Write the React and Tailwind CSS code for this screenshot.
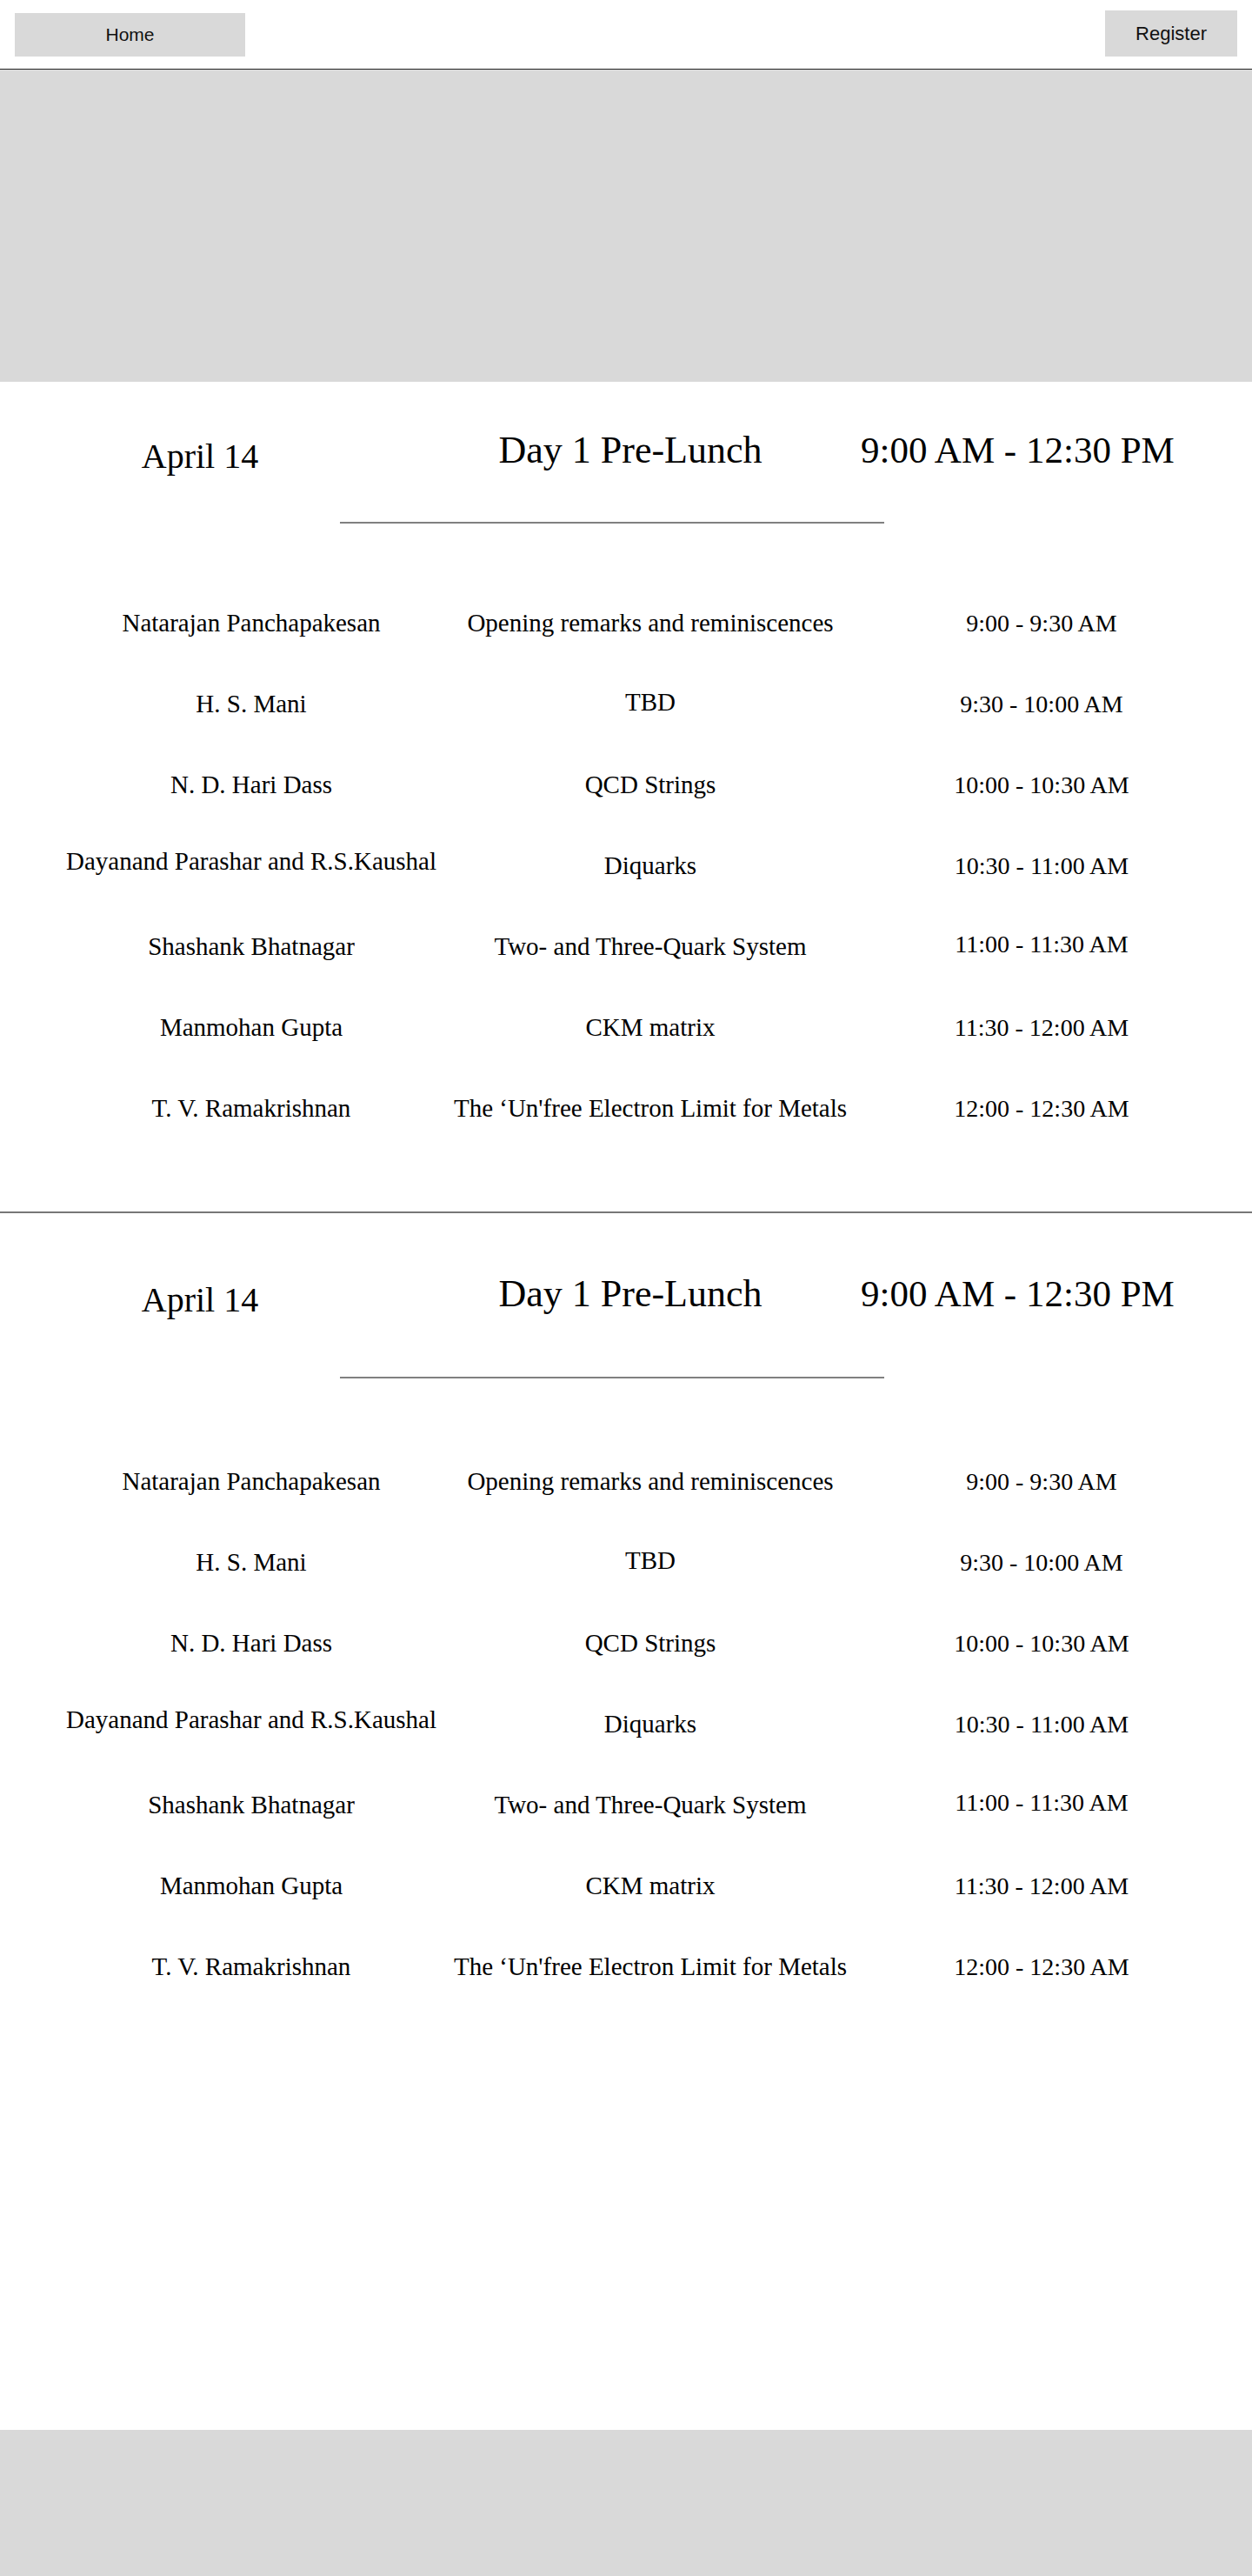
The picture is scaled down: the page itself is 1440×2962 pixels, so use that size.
import React from 'react';

const talks = [
  { speaker: 'Natarajan Panchapakesan', title: 'Opening remarks and reminiscences', time: '9:00 - 9:30 AM' },
  { speaker: 'H. S. Mani', title: 'TBD', time: '9:30 - 10:00 AM', titleShift: '-translate-y-[2px]' },
  { speaker: 'N. D. Hari Dass', title: 'QCD Strings', time: '10:00 - 10:30 AM' },
  { speaker: 'Dayanand Parashar and R.S.Kaushal', title: 'Diquarks', time: '10:30 - 11:00 AM', speakerShift: '-translate-y-[5px]' },
  { speaker: 'Shashank Bhatnagar', title: 'Two- and Three-Quark System', time: '11:00 - 11:30 AM', timeShift: '-translate-y-[3px]' },
  { speaker: 'Manmohan Gupta', title: 'CKM matrix', time: '11:30 - 12:00 AM' },
  { speaker: 'T. V. Ramakrishnan', title: "The \u2018Un'free Electron Limit for Metals", time: '12:00 - 12:30 AM' },
];

const serif = "font-['Liberation_Serif','Times_New_Roman',serif]";

const Session = ({ headingGap, rowsGap }) => (
  <section>
    {/* Session heading */}
    <div className="grid grid-cols-[460px_530px_1fr] items-start leading-none text-black">
      <div className="flex justify-center mt-[9px] text-[40px]">April 14</div>
      <div className="flex justify-center text-[44px]">Day 1 Pre-Lunch</div>
      <div className="flex justify-center pr-[90px] text-[43px] whitespace-nowrap">9:00 AM - 12:30 PM</div>
    </div>
    <div className={`ml-[391px] w-[626px] h-[2px] bg-[#808080] ${headingGap}`} />

    {/* Talks */}
    <div className={`flex flex-col ${rowsGap}`}>
      {talks.map((t) => (
        <div key={t.speaker} className="grid grid-cols-[578px_340px_1fr] h-[93px] items-center text-[29px] leading-none text-black whitespace-nowrap">
          <div className={`flex justify-center ${t.speakerShift || ''}`}>{t.speaker}</div>
          <div className={`flex justify-center ${t.titleShift || ''}`}>{t.title}</div>
          <div className={`flex justify-center pl-[38px] text-[28px] ${t.timeShift || ''}`}>{t.time}</div>
        </div>
      ))}
    </div>
  </section>
);

export default function App() {
  return (
    <div className={`w-[1440px] min-h-[2962px] bg-white flex flex-col ${serif}`}>
      {/* Header */}
      <header className="h-[80px] flex items-start justify-between px-[17px] border-b border-[#222] font-['Liberation_Sans_Narrow','Liberation_Sans',sans-serif]">
        <a href="#" className="mt-[15px] w-[265px] h-[50px] bg-[#d9d9d9] flex items-center justify-center text-[21px] text-[#111]">
          Home
        </a>
        <a href="#" className="mt-[12px] w-[152px] h-[53px] bg-[#d9d9d9] flex items-center justify-center text-[22px] text-[#111]">
          Register
        </a>
      </header>

      {/* Hero */}
      <div className="h-[359px] bg-[#d9d9d9]" />

      <div className="pt-[57px]">
        <Session headingGap="mt-[55px]" rowsGap="mt-[68px]" />
      </div>

      <div className="mt-[72px] h-[2px] bg-[#777]" />

      <div className="pt-[71px]">
        <Session headingGap="mt-[68px]" rowsGap="mt-[72px]" />
      </div>

      <div className="flex-1" />

      {/* Footer */}
      <footer className="h-[168px] bg-[#d9d9d9]" />
    </div>
  );
}
